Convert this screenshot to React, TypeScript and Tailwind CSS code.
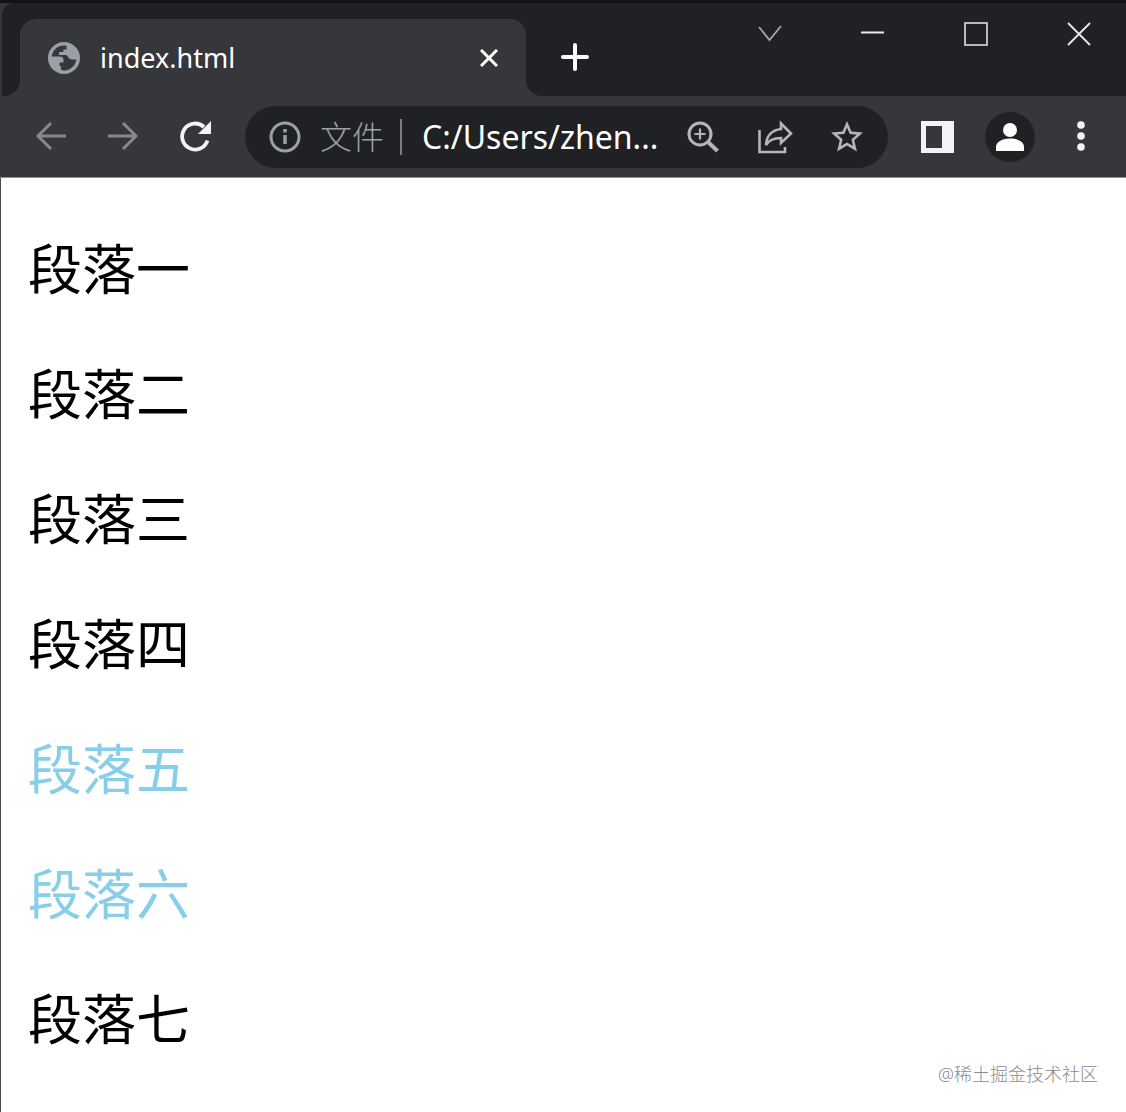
import React from "react";

const paragraphs = [
  { text: "段落一", highlighted: false },
  { text: "段落二", highlighted: false },
  { text: "段落三", highlighted: false },
  { text: "段落四", highlighted: false },
  { text: "段落五", highlighted: true },
  { text: "段落六", highlighted: true },
  { text: "段落七", highlighted: false },
];

function GlobeIcon() {
  return (
    <svg viewBox="0 0 32 32" className="size-8 shrink-0" aria-hidden="true">
      <circle cx="16" cy="16" r="16" fill="#9aa0a6" />
      <path
        d="M18.500 3.700C10 2 4.500 8 3.700 14.500H11C14 14.500 15.500 15.500 15.500 18V20.500H11.500V24H13V28C20 30 27.500 25 28.300 17.500H24C20 17.500 20.500 13.500 18 13H11V10H14C15.500 10 15.500 8.500 15.500 7.500H18.500Z"
        fill="#36373a"
      />
    </svg>
  );
}

function TabStrip() {
  return (
    <div className="flex h-[93px] bg-[#36373a] pl-0.5">
      <div className="w-[18px] shrink-0 rounded-br-2xl rounded-tl-xl bg-[#202124]" />
      <div className="w-[506px] min-w-0 bg-[#202124] pt-4">
        <div className="flex h-full items-center rounded-t-2xl bg-[#36373a] pl-7 pr-6">
          <GlobeIcon />
          <span className="ml-5 flex-1 truncate text-[27px] leading-9 text-white">
            index.html
          </span>
          <button type="button" aria-label="Close tab" className="p-1">
            <svg viewBox="0 0 18 18" className="size-[18px]" fill="none" stroke="#fff" strokeWidth="3">
              <path d="M1 1L17 17M17 1L1 17" />
            </svg>
          </button>
        </div>
      </div>
      <div className="flex flex-1 items-start justify-between rounded-bl-2xl bg-[#202124] pl-[35px] pr-[35px]">
        <button type="button" aria-label="New tab" className="mt-10">
          <svg viewBox="0 0 28 28" className="size-7" fill="none" stroke="#fff" strokeWidth="4">
            <path d="M14 2V26M2 14H26" strokeLinecap="round" />
          </svg>
        </button>
        <div className="mt-[19px] flex gap-[79px]">
          <button type="button" aria-label="Search tabs">
            <svg viewBox="0 0 24 24" className="size-6" fill="none" stroke="#a5a6a8" strokeWidth="1.800">
              <path d="M1 5L11.500 18L23 4" />
            </svg>
          </button>
          <button type="button" aria-label="Minimize">
            <svg viewBox="0 0 24 24" className="size-6" fill="none" stroke="#e8eaed" strokeWidth="2">
              <path d="M0 10.500H23" />
            </svg>
          </button>
          <button type="button" aria-label="Maximize">
            <svg viewBox="0 0 24 24" className="size-6" fill="none" stroke="#e8eaed" strokeWidth="1.500">
              <rect x="1" y="1" width="22" height="22" />
            </svg>
          </button>
          <button type="button" aria-label="Close window">
            <svg viewBox="0 0 24 24" className="size-6" fill="none" stroke="#e8eaed" strokeWidth="1.800">
              <path d="M1 1L23 23M23 1L1 23" />
            </svg>
          </button>
        </div>
      </div>
    </div>
  );
}

function AddressBar() {
  return (
    <div className="ml-[34px] flex h-[62px] min-w-0 flex-1 items-center rounded-full bg-[#202124] pl-6 pr-[25px]">
      <svg viewBox="0 0 32 32" className="size-8 shrink-0" fill="none" stroke="#9aa0a6" strokeWidth="3" aria-hidden="true">
        <circle cx="16" cy="16" r="14" />
        <path d="M16 14V23M16 8V11.500" strokeWidth="3.500" />
      </svg>
      <label htmlFor="url" className="ml-[19px] shrink-0 text-[32px] leading-10 font-light text-[#9aa0a6]">
        文件
      </label>
      <div className="ml-4 h-9 w-[2px] shrink-0 bg-[#7c7f83]" />
      <input
        id="url"
        type="text"
        readOnly
        value="C:/Users/zhen..."
        className="ml-5 h-10 min-w-0 flex-1 bg-transparent text-[32px] leading-10 text-white outline-none"
      />
      <div className="ml-2 flex items-center gap-[38px]">
        <button type="button" aria-label="Zoom">
          <svg viewBox="0 0 32 32" className="size-8" fill="none" stroke="#b4b6b9" strokeWidth="3">
            <circle cx="13" cy="13" r="11" />
            <path d="M21 21L30.500 30" strokeWidth="4" />
            <path d="M13 7.500V18.500M7.500 13H18.500" strokeWidth="2.200" />
          </svg>
        </button>
        <button type="button" aria-label="Share">
          <svg viewBox="0 0 36 36" className="size-9" fill="none" stroke="#b4b6b9" strokeWidth="2.600">
            <path d="M2.500 11V33H28V28" />
            <path d="M24 4.500L34 14.500L24 24V19C17 19 12 21 9 26C9.500 17.500 14.500 11 24 10Z" />
          </svg>
        </button>
        <button type="button" aria-label="Bookmark">
          <svg viewBox="2 2 20 20" className="size-8" fill="#b4b6b9">
            <path d="M22 9.240l-7.190-.62L12 2 9.190 8.630 2 9.240l5.460 4.730L5.820 21 12 17.270 18.180 21l-1.630-7.030L22 9.240zM12 15.400l-3.760 2.270 1-4.280-3.320-2.880 4.380-.38L12 6.100l1.710 4.040 4.380.38-3.320 2.880 1 4.280L12 15.400z" />
          </svg>
        </button>
      </div>
    </div>
  );
}

function Toolbar() {
  return (
    <div className="flex h-[82px] items-center border-b border-[#8b8b8d] bg-[#36373a] pl-[35px] pr-[29px]">
      <div className="flex gap-10">
        <button type="button" aria-label="Back">
          <svg viewBox="0 0 32 32" className="size-8" fill="none" stroke="#87898c" strokeWidth="3">
            <path d="M31 15H4M16 2L3 15L16 28" />
          </svg>
        </button>
        <button type="button" aria-label="Forward">
          <svg viewBox="0 0 32 32" className="size-8" fill="none" stroke="#87898c" strokeWidth="3">
            <path d="M1 15H28M16 2L29 15L16 28" />
          </svg>
        </button>
        <button type="button" aria-label="Reload">
          <svg viewBox="0 0 32 32" className="size-8" fill="none" stroke="#f1f3f4" strokeWidth="3.800">
            <path d="M28.500 19.500A13 13 0 1 1 25 6" />
            <path d="M32 0V13H19Z" fill="#f1f3f4" stroke="none" />
          </svg>
        </button>
      </div>
      <AddressBar />
      <button type="button" aria-label="Side panel" className="ml-[33px]">
        <svg viewBox="0 0 34 34" className="size-[34px]">
          <path fill="#f1f3f4" fillRule="evenodd" d="M0 1H33V33H0ZM5 6V28H21V6Z" />
        </svg>
      </button>
      <button type="button" aria-label="Profile" className="ml-[30px] rounded-full bg-[#202124]">
        <svg viewBox="0 0 50 50" className="size-[50px]" fill="#fff">
          <circle cx="25" cy="18" r="7" />
          <path d="M11 39V35C11 29.500 18 26.500 25 26.500S39 29.500 39 35V39Z" />
        </svg>
      </button>
      <button type="button" aria-label="Menu" className="ml-[30px]">
        <svg viewBox="0 0 32 32" className="size-8" fill="#f1f3f4">
          <circle cx="16" cy="4" r="3.800" />
          <circle cx="16" cy="15" r="3.800" />
          <circle cx="16" cy="26" r="3.800" />
        </svg>
      </button>
    </div>
  );
}

function App() {
  return (
    <div className="flex min-h-screen flex-col border-t-[3px] border-[#111214] bg-[#4a4a4c] font-['Noto_Sans','Noto_Sans_CJK_SC',sans-serif]">
      <TabStrip />
      <Toolbar />
      <main className="relative ml-px flex flex-1 flex-col gap-[54px] bg-white pl-[27px] pt-14">
        {paragraphs.map(({ text, highlighted }) => (
          <p
            key={text}
            className={`text-[54px] leading-[71px] ${highlighted ? "text-[#87ceeb]" : "text-black"}`}
          >
            {text}
          </p>
        ))}
        <span className="absolute bottom-6 right-7 text-[18px] leading-7 font-light text-[#8c8c8c]">
          @稀土掘金技术社区
        </span>
      </main>
    </div>
  );
}

export default App;
